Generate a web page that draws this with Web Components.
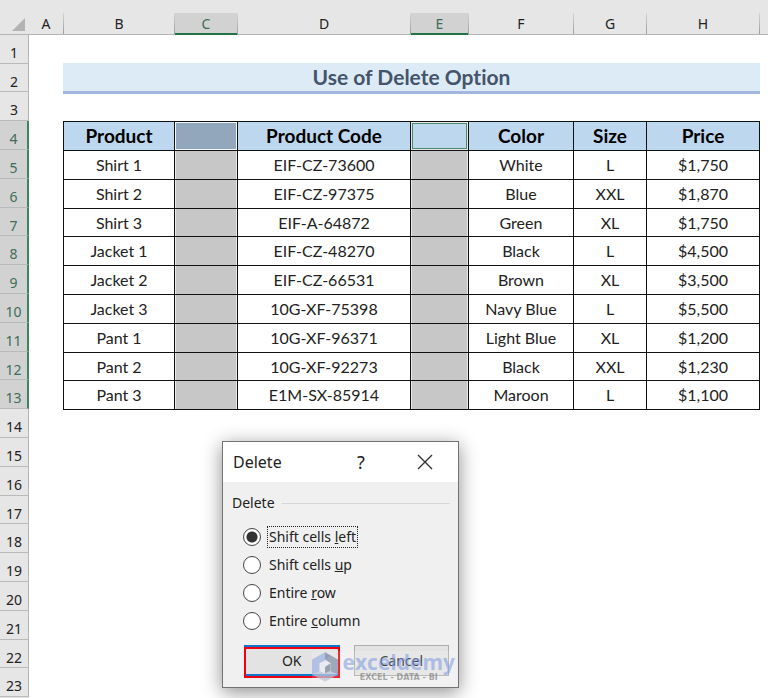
<!DOCTYPE html>
<html lang="en">
<head>
<meta charset="utf-8">
<title>Use of Delete Option</title>
<style>
body {
    margin: 0;
    background: #fff;
    color: #222;
    font-family: Lato, "Liberation Sans", sans-serif;
    font-variant-ligatures: none;
}
</style>
</head>
<body>
<excel-sheet>
    <column-bar slot="columns"></column-bar>
    <row-bar slot="rows"></row-bar>
    <sheet-title>Use of Delete Option</sheet-title>
    <product-table></product-table>
    <delete-dialog slot="dialog">Delete</delete-dialog>
</excel-sheet>

<script>
// the frame: column letters on top, row numbers on the left, cells in the rest
customElements.define('excel-sheet', class extends HTMLElement {
    constructor() {
        super();
        this.attachShadow({ mode: 'open' });
        this.shadowRoot.innerHTML = `
        <style>
        :host {
            display: grid;
            grid-template-columns: 29px 1fr;
            grid-template-rows: 35px auto;
            position: relative;
            height: 100vh;
            overflow: hidden;
        }
        .corner {
            display: flex;
            justify-content: flex-end;
            align-items: flex-end;
            box-sizing: border-box;
            padding: 0 4px 3px 0;
            background: #e6e6e6;
            border-bottom: 1px solid #b4b4b4;
        }
        .corner svg {
            display: block;
        }
        .cells {
            display: grid;
            grid-template-columns: 34fr 697fr 8fr;
            align-content: start;
            row-gap: 27px;
            padding-top: 28px;
        }
        .cells ::slotted(*) {
            grid-column: 2;
        }
        </style>
        <div class="corner">
            <svg width="13" height="13"><path d="M13 0V13H0Z" fill="#b3b3b3"/></svg>
        </div>
        <slot name="columns"></slot>
        <slot name="rows"></slot>
        <div class="cells"><slot></slot></div>
        <slot name="dialog"></slot>
        `;
    }
});

customElements.define('column-bar', class extends HTMLElement {
    constructor() {
        super();
        this.attachShadow({ mode: 'open' });
        var cols = '';
        ['A', 'B', 'C', 'D', 'E', 'F', 'G', 'H', ''].forEach(function(name) {
            var on = name == 'C' || name == 'E';
            cols += '<span' + (on ? ' class="on"' : '') + '>' + name + '</span>';
        });
        this.shadowRoot.innerHTML = `
        <style>
        :host {
            display: grid;
            grid-template-columns: 35fr 111fr 63fr 173fr 58fr 105fr 73fr 113fr 8fr;
            box-sizing: border-box;
            padding-top: 13px;
            background: #e6e6e6;
            border-bottom: 1px solid #b4b4b4;
            font: 14px/21px "Noto Sans", sans-serif;
            text-align: center;
        }
        span {
            border-right: 1px solid;
            border-image: linear-gradient(#d8d8d8, #999) 1;
        }
        span:last-child {
            border: 0;
        }
        .on {
            margin-bottom: -1px;
            background: linear-gradient(#217346, #217346) bottom / 100% 2px no-repeat #d2d2d2;
            color: #3c6e58;
        }
        </style>
        ` + cols;
    }
});

customElements.define('row-bar', class extends HTMLElement {
    constructor() {
        super();
        this.attachShadow({ mode: 'open' });
        var rows = '';
        for (var i = 1; i <= 23; i++) {
            rows += '<span' + (i >= 4 && i <= 13 ? ' class="on"' : '') + '>' + i + '</span>';
        }
        this.shadowRoot.innerHTML = `
        <style>
        :host {
            display: block;
            background: #e6e6e6;
            font: 14px/20px "Noto Sans", sans-serif;
            text-align: center;
        }
        span {
            display: block;
            box-sizing: border-box;
            height: 29px;
            padding-top: 8px;
            border-right: 1px solid #b4b4b4;
            border-bottom: 1px solid #b9b9b9;
        }
        span:nth-child(5n + 3) {
            height: 28px;
        }
        .on {
            background: #d2d2d2;
            border-right: 2px solid #3b8560;
            color: #3c6e58;
        }
        </style>
        ` + rows;
    }
});

customElements.define('sheet-title', class extends HTMLElement {
    constructor() {
        super();
        this.attachShadow({ mode: 'open' });
        this.shadowRoot.innerHTML = `
        <style>
        :host {
            display: block;
            background: #ddebf7;
            border-bottom: 3px solid #a1b5df;
        }
        h1 {
            margin: 0;
            color: #44546a;
            font-size: 21px;
            line-height: 28px;
            text-align: center;
        }
        </style>
        <h1><slot></slot></h1>
        `;
    }
});

var products = [
    ['Shirt 1', 'EIF-CZ-73600', 'White', 'L', '$1,750'],
    ['Shirt 2', 'EIF-CZ-97375', 'Blue', 'XXL', '$1,870'],
    ['Shirt 3', 'EIF-A-64872', 'Green', 'XL', '$1,750'],
    ['Jacket 1', 'EIF-CZ-48270', 'Black', 'L', '$4,500'],
    ['Jacket 2', 'EIF-CZ-66531', 'Brown', 'XL', '$3,500'],
    ['Jacket 3', '10G-XF-75398', 'Navy Blue', 'L', '$5,500'],
    ['Pant 1', '10G-XF-96371', 'Light Blue', 'XL', '$1,200'],
    ['Pant 2', '10G-XF-92273', 'Black', 'XXL', '$1,230'],
    ['Pant 3', 'E1M-SX-85914', 'Maroon', 'L', '$1,100']
];

customElements.define('product-table', class extends HTMLElement {
    constructor() {
        super();
        this.attachShadow({ mode: 'open' });
        var body = '';
        products.forEach(function(p) {
            body += '<tr><td>' + p[0] + '</td><td class="sel"></td><td>' + p[1] +
                '</td><td class="sel"></td><td>' + p[2] + '</td><td>' + p[3] + '</td><td>' + p[4] + '</td></tr>';
        });
        this.shadowRoot.innerHTML = `
        <style>
        :host {
            display: block;
        }
        table {
            width: 100%;
            table-layout: fixed;
            border-collapse: collapse;
        }
        tr {
            height: 29px;
        }
        tbody tr:nth-child(5n + 3) {
            height: 28px;
        }
        th, td {
            padding: 0;
            border: 1px solid #111;
            font-size: 16px;
            line-height: 24px;
            text-align: center;
        }
        th {
            background: #bdd7ee;
            color: #000;
            font-size: 19px;
        }
        /* selected columns keep a light edge inside the black grid */
        .sel {
            background: #c7c7c7;
            box-shadow: inset 1px 0 #e8e8e8, inset -1px 0 #e8e8e8;
        }
        thead .sel {
            background: #93a7bc;
            box-shadow: inset 0 0 0 1px #f4f4f4;
        }
        thead .active {
            background: #bdd7ee;
            box-shadow: inset 0 0 0 1px #e8e8e8, inset 0 0 0 2px #4b8a6c;
        }
        </style>
        <table>
            <colgroup>
                <col style="width: 111px"><col style="width: 63px"><col style="width: 173px">
                <col style="width: 58px"><col style="width: 105px"><col style="width: 73px">
                <col style="width: 113px">
            </colgroup>
            <thead>
                <tr>
                    <th>Product</th><th class="sel"></th><th>Product Code</th>
                    <th class="sel active"></th><th>Color</th><th>Size</th><th>Price</th>
                </tr>
            </thead>
            <tbody>` + body + `</tbody>
        </table>
        `;
    }
});

customElements.define('delete-dialog', class extends HTMLElement {
    constructor() {
        super();
        this.attachShadow({ mode: 'open' });
        this.shadowRoot.innerHTML = `
        <style>
        :host {
            position: absolute;
            left: 222px;
            top: 441px;
            box-sizing: border-box;
            width: 237px;
            border: 1px solid #737373;
            background: #f0f0f0;
            box-shadow: 0 4px 18px rgba(0, 0, 0, .45);
            color: #222;
            font: 14px/20px "Noto Sans", sans-serif;
        }
        header {
            display: flex;
            align-items: center;
            height: 40px;
            padding: 0 25px 0 10px;
            background: #fff;
        }
        h2 {
            flex: 1;
            margin: 0;
            font-size: 16px;
            font-weight: normal;
        }
        header button {
            display: flex;
            justify-content: center;
            width: 20px;
            padding: 0;
            border: 0;
            background: none;
            color: #222;
            font: 18px/24px "Noto Sans", sans-serif;
        }
        header button + button {
            margin-left: 46px;
            width: 16px;
        }
        fieldset {
            min-width: 0;
            margin: 0;
            padding: 11px 8px 0 9px;
            border: 0;
        }
        legend {
            display: contents;
        }
        .caption {
            display: flex;
            align-items: center;
            gap: 7px;
            margin-bottom: 10px;
        }
        .caption::after {
            content: "";
            flex: 1;
            border-top: 1px solid #d6d6d6;
        }
        label {
            display: flex;
            align-items: center;
            gap: 6px;
            height: 28px;
            padding-left: 11px;
        }
        label span {
            padding: 0 1px;
            border: 1px dotted transparent;
        }
        label :checked + span {
            border-color: #222;
        }
        input {
            appearance: none;
            box-sizing: border-box;
            width: 18px;
            height: 18px;
            margin: 0;
            border: 1px solid #444;
            border-radius: 50%;
            background: #fff;
        }
        input:checked {
            background: radial-gradient(circle, #333 5px, #fff 6px);
        }
        footer {
            display: grid;
            grid-template-columns: 1fr 1fr;
            gap: 14px;
            padding: 10px 9px 11px 21px;
        }
        footer button {
            height: 31px;
            padding: 0;
            border: 1px solid #adadad;
            background: #e3e3e3;
            color: #222;
            font: 14px/20px "Noto Sans", sans-serif;
        }
        footer .ok {
            position: relative;
            border: 2px solid #0f74cc;
        }
        /* red marker round the default button */
        .ok::after {
            content: "";
            position: absolute;
            inset: 0 -2px -4px;
            border: 2px solid #f00010;
        }
        brand-mark {
            position: absolute;
            right: 3px;
            bottom: 4px;
        }
        </style>
        <header>
            <h2><slot></slot></h2>
            <button type="button" title="Help">?</button>
            <button type="button" title="Close">
                <svg width="16" height="16"><path d="M1 1L15 15M15 1L1 15" stroke="#333" stroke-width="1.4"/></svg>
            </button>
        </header>
        <fieldset>
            <legend><span class="caption">Delete</span></legend>
            <label><input type="radio" name="shift" checked><span>Shift cells <u>l</u>eft</span></label>
            <label><input type="radio" name="shift"><span>Shift cells <u>u</u>p</span></label>
            <label><input type="radio" name="shift"><span>Entire <u>r</u>ow</span></label>
            <label><input type="radio" name="shift"><span>Entire <u>c</u>olumn</span></label>
        </fieldset>
        <footer>
            <button type="button" class="ok">OK</button>
            <button type="button">Cancel</button>
        </footer>
        <brand-mark>exceldemy<span slot="tag">EXCEL - DATA - BI</span></brand-mark>
        `;
    }
});

customElements.define('brand-mark', class extends HTMLElement {
    constructor() {
        super();
        this.attachShadow({ mode: 'open' });
        this.shadowRoot.innerHTML = `
        <style>
        :host {
            display: flex;
            align-items: center;
            gap: 5px;
            pointer-events: none;
            background: rgba(255, 255, 255, .15);
        }
        .words {
            display: grid;
            justify-items: center;
        }
        .name {
            color: rgba(120, 150, 225, .55);
            font: bold 21px/22px "Open Sans", sans-serif;
        }
        .tag {
            color: rgba(120, 120, 120, .65);
            font: bold 8px/10px "DejaVu Sans", sans-serif;
        }
        </style>
        <svg width="26" height="30" viewBox="0 0 28 32">
            <path d="M14 0L0 8V24L14 18V8L20 4Z" fill="#9db4e2" opacity=".75"/>
            <path d="M14 0L28 8V24L20 21V12L14 8Z" fill="#8793aa" opacity=".75"/>
            <path d="M0 24L8 20L14 23L20 20L28 24L14 32Z" fill="#b9c3da" opacity=".7"/>
            <path d="M14 9L20 12V20L14 23L8 20V12Z" fill="#e8ebf2"/>
            <path d="M14 16L20 12V20L14 23Z" fill="#9aa1ae"/>
        </svg>
        <div class="words">
            <span class="name"><slot></slot></span>
            <span class="tag"><slot name="tag"></slot></span>
        </div>
        `;
    }
});
</script>
</body>
</html>
